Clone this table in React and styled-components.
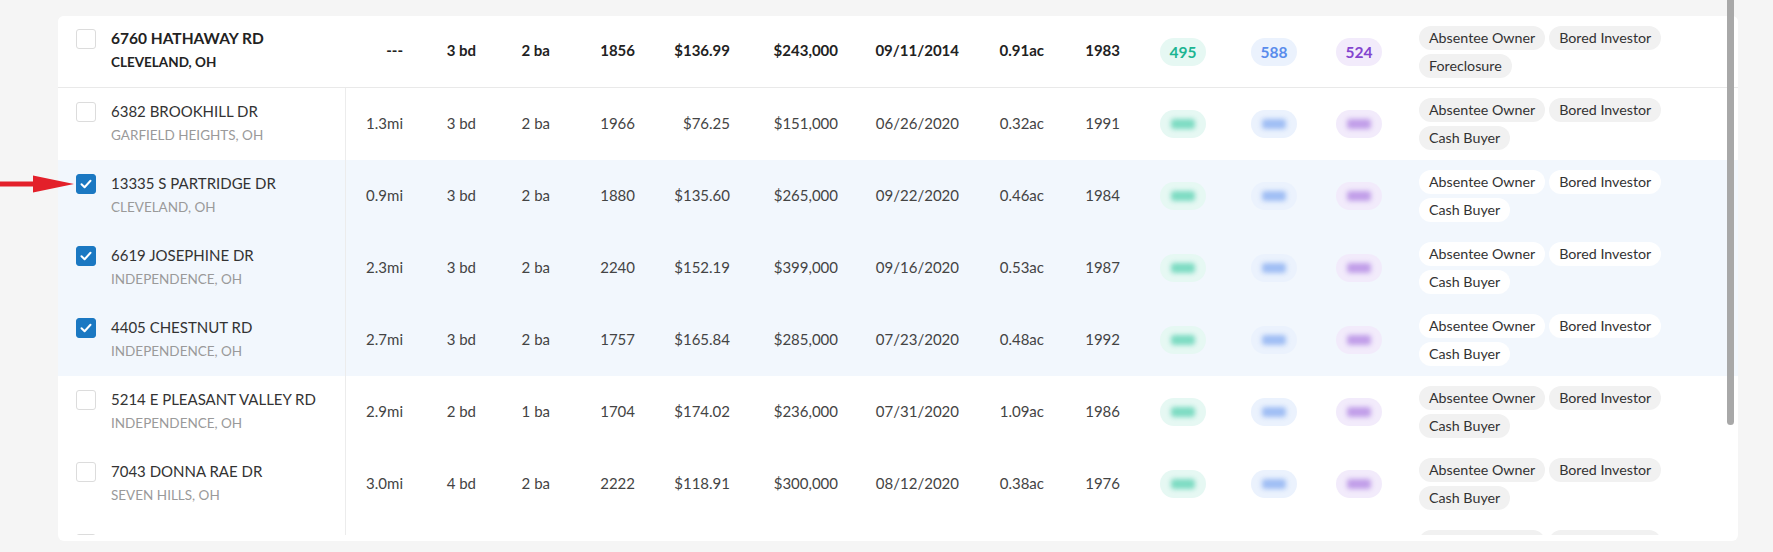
import React from "react";
import styled, { createGlobalStyle, css } from "styled-components";

const COLORS = {
  page: "#f5f5f5",
  divider: "#e9e9e9",
  text: "#444444",
  strong: "#222222",
  muted: "#9a9a9a",
  selected: "#f2f7fd",
  check: "#1b78c2",
  tag: "#f1f1f1",
};

const SCORES = [
  { text: "#1cb592", bg: "#e6f8f3", blur: "#62d4b6" },
  { text: "#5a8cec", bg: "#ebf2fd", blur: "#8cb0f2" },
  { text: "#8444cf", bg: "#f2ebfb", blur: "#b48be4" },
];

const subject = {
  street: "6760 HATHAWAY RD",
  city: "CLEVELAND, OH",
  dist: "---",
  beds: "3 bd",
  baths: "2 ba",
  sqft: "1856",
  ppsf: "$136.99",
  price: "$243,000",
  date: "09/11/2014",
  lot: "0.91ac",
  year: "1983",
  scores: ["495", "588", "524"],
  tags: ["Absentee Owner", "Bored Investor", "Foreclosure"],
};

const comps = [
  { street: "6382 BROOKHILL DR", city: "GARFIELD HEIGHTS, OH", dist: "1.3mi", beds: "3 bd", baths: "2 ba", sqft: "1966", ppsf: "$76.25", price: "$151,000", date: "06/26/2020", lot: "0.32ac", year: "1991" },
  { street: "13335 S PARTRIDGE DR", city: "CLEVELAND, OH", dist: "0.9mi", beds: "3 bd", baths: "2 ba", sqft: "1880", ppsf: "$135.60", price: "$265,000", date: "09/22/2020", lot: "0.46ac", year: "1984", checked: true },
  { street: "6619 JOSEPHINE DR", city: "INDEPENDENCE, OH", dist: "2.3mi", beds: "3 bd", baths: "2 ba", sqft: "2240", ppsf: "$152.19", price: "$399,000", date: "09/16/2020", lot: "0.53ac", year: "1987", checked: true },
  { street: "4405 CHESTNUT RD", city: "INDEPENDENCE, OH", dist: "2.7mi", beds: "3 bd", baths: "2 ba", sqft: "1757", ppsf: "$165.84", price: "$285,000", date: "07/23/2020", lot: "0.48ac", year: "1992", checked: true },
  { street: "5214 E PLEASANT VALLEY RD", city: "INDEPENDENCE, OH", dist: "2.9mi", beds: "2 bd", baths: "1 ba", sqft: "1704", ppsf: "$174.02", price: "$236,000", date: "07/31/2020", lot: "1.09ac", year: "1986" },
  { street: "7043 DONNA RAE DR", city: "SEVEN HILLS, OH", dist: "3.0mi", beds: "4 bd", baths: "2 ba", sqft: "2222", ppsf: "$118.91", price: "$300,000", date: "08/12/2020", lot: "0.38ac", year: "1976" },
  { street: "6120 ALDENHAM DR", city: "SEVEN HILLS, OH", dist: "3.1mi", beds: "3 bd", baths: "2 ba", sqft: "1690", ppsf: "$150.30", price: "$254,000", date: "08/03/2020", lot: "0.41ac", year: "1978" },
];

const compTags = ["Absentee Owner", "Bored Investor", "Cash Buyer"];
const valueKeys = ["dist", "beds", "baths", "sqft", "ppsf", "price", "date", "lot", "year"];

const GlobalStyle = createGlobalStyle`
  body {
    margin: 0;
    background: ${COLORS.page};
    font-family: Lato, "Open Sans", Arial, sans-serif;
  }
`;

const App = () => {
  return (
    <>
      <GlobalStyle />
      <Page>
        <Card>
          <Row $subject>
            <PropertyRow data={subject} subject />
          </Row>
          <Body>
            {comps.map((comp, i) => (
              <Row key={i} $checked={comp.checked}>
                <PropertyRow data={comp} />
              </Row>
            ))}
          </Body>
        </Card>
        <Arrow width="74" height="18" viewBox="0 0 74 18">
          <rect x="0" y="6.5" width="38" height="5" fill="#e3202a" />
          <polygon points="33,0.5 74,9 33,17.5" fill="#e3202a" />
        </Arrow>
        <ScrollThumb />
      </Page>
    </>
  );
};

const PropertyRow = ({ data, subject }) => {
  const tags = data.tags || compTags;
  return (
    <>
      <AddressCell $subject={subject}>
        <Checkbox $checked={data.checked}>
          {data.checked && (
            <svg width="12" height="10" viewBox="0 0 12 10">
              <path d="M1.5 5.2 L4.6 8.2 L10.5 1.8" stroke="#fff" strokeWidth="2" fill="none" strokeLinecap="round" strokeLinejoin="round" />
            </svg>
          )}
        </Checkbox>
        <Address>
          <Street $subject={subject}>{data.street}</Street>
          <City $subject={subject}>{data.city}</City>
        </Address>
      </AddressCell>
      {valueKeys.map((key) => (
        <Value key={key} $subject={subject}>
          {data[key]}
        </Value>
      ))}
      {SCORES.map((score, i) => (
        <ScoreCell key={i}>
          <Score $bg={score.bg} $color={score.text}>
            {subject ? data.scores[i] : <Blurred $color={score.blur} />}
          </Score>
        </ScoreCell>
      ))}
      <Tags>
        {tags.map((tag) => (
          <Tag key={tag} $onBlue={data.checked}>
            {tag}
          </Tag>
        ))}
      </Tags>
    </>
  );
};

const Page = styled.div`
  position: relative;
  height: 552px;
  padding: 16px 0 0 58px;
  box-sizing: border-box;
`;

const Card = styled.div`
  width: 1680px;
  height: 525px;
  background: #fff;
  border-radius: 6px;
  overflow: hidden;
  display: flex;
  flex-direction: column;
`;

const Body = styled.div`
  height: 447px;
  overflow: hidden;
`;

const Row = styled.div`
  display: grid;
  grid-template-columns: 288px 57px 73px 74px 85px 95px 108px 121px 85px 76px 86px 91px 85px 1fr;
  align-items: center;
  height: 72px;
  box-sizing: border-box;
  color: ${COLORS.text};
  background: ${(p) => (p.$checked ? COLORS.selected : "#fff")};
  ${(p) =>
    p.$subject &&
    css`
      border-bottom: 1px solid ${COLORS.divider};
      color: ${COLORS.strong};
    `}
`;

const AddressCell = styled.div`
  align-self: stretch;
  display: flex;
  gap: 15px;
  padding: ${(p) => (p.$subject ? "11px" : "12px")} 0 0 18px;
  box-sizing: border-box;
  border-right: 1px solid ${(p) => (p.$subject ? "transparent" : "#ececec")};
`;

const Checkbox = styled.div`
  width: 20px;
  height: 20px;
  margin-top: 2px;
  flex-shrink: 0;
  box-sizing: border-box;
  border-radius: 3px;
  border: 1px solid ${(p) => (p.$checked ? COLORS.check : "#dcdcdc")};
  background: ${(p) => (p.$checked ? COLORS.check : "#fff")};
  display: flex;
  align-items: center;
  justify-content: center;
`;

const Address = styled.div`
  display: flex;
  flex-direction: column;
  white-space: nowrap;
`;

const Street = styled.div`
  font-size: ${(p) => (p.$subject ? "15.5px" : "15px")};
  line-height: 22px;
  color: ${(p) => (p.$subject ? COLORS.strong : "#333")};
  font-weight: ${(p) => (p.$subject ? 700 : 400)};
`;

const City = styled.div`
  margin-top: 2px;
  font-size: 13.5px;
  line-height: 22px;
  color: ${(p) => (p.$subject ? COLORS.strong : COLORS.muted)};
  font-weight: ${(p) => (p.$subject ? 700 : 400)};
`;

const Value = styled.div`
  margin-bottom: 3px;
  text-align: right;
  font-size: 15px;
  white-space: nowrap;
  font-weight: ${(p) => (p.$subject ? 700 : 400)};
`;

const ScoreCell = styled.div`
  display: flex;
  justify-content: flex-end;
`;

const Score = styled.div`
  width: 46px;
  height: 28px;
  border-radius: 14px;
  background: ${(p) => p.$bg};
  color: ${(p) => p.$color};
  font-size: 15.5px;
  font-weight: 700;
  display: flex;
  align-items: center;
  justify-content: center;
`;

const Blurred = styled.span`
  width: 24px;
  height: 10px;
  border-radius: 3px;
  background: ${(p) => p.$color};
  opacity: 0.8;
  filter: blur(2.4px);
`;

const Tags = styled.div`
  display: flex;
  flex-wrap: wrap;
  align-content: flex-start;
  gap: 4px;
  padding-left: 37px;
  padding-right: 60px;
`;

const Tag = styled.span`
  height: 24px;
  padding: 0 10px;
  border-radius: 12px;
  background: ${(p) => (p.$onBlue ? "#fff" : COLORS.tag)};
  color: #333;
  font-size: 14.25px;
  line-height: 24px;
  white-space: nowrap;
`;

const Arrow = styled.svg`
  position: absolute;
  left: 0;
  top: 175px;
`;

const ScrollThumb = styled.div`
  position: absolute;
  left: 1727px;
  top: 0;
  width: 7px;
  height: 425px;
  background: #a8a8a8;
  border-radius: 0 0 4px 4px;
`;

export default App;
